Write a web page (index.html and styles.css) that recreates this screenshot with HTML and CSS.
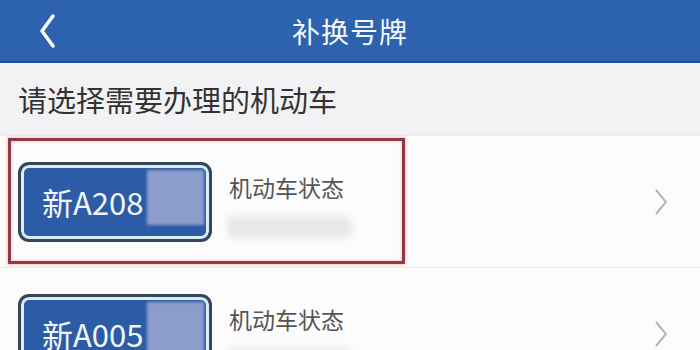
FILE: index.html
```
<!doctype html>
<html>
<head>
  <meta charset="utf-8">
  <title>补换号牌</title>
  <link rel="stylesheet" href="styles.css">
</head>
<body>

	<div class="topbar">
		<a class="back">
			<svg width="20" height="36" viewBox="0 0 20 36"><polyline points="15,3 4,18 15,33" fill="none" stroke="#fff" stroke-width="3.5" stroke-linecap="round" stroke-linejoin="round"/></svg>
		</a>
		<div class="title">补换号牌</div>
		<span></span>
	</div>

	<div class="section-title">请选择需要办理的机动车</div>

	<div class="list">
		<div class="row">
			<div class="plate">
				<span>新A208</span>
				<i class="mask"></i>
			</div>
			<div class="info">
				<div class="label">机动车状态</div>
				<div class="blurred"></div>
			</div>
			<svg class="arrow" width="14" height="28" viewBox="0 0 14 28"><polyline points="2,2 12,14 2,26" fill="none" stroke="#b4b4b4" stroke-width="2"/></svg>
			<div class="highlight"></div>
		</div>

		<div class="row">
			<div class="plate">
				<span>新A005</span>
				<i class="mask"></i>
			</div>
			<div class="info">
				<div class="label">机动车状态</div>
				<div class="blurred"></div>
			</div>
			<svg class="arrow" width="14" height="28" viewBox="0 0 14 28"><polyline points="2,2 12,14 2,26" fill="none" stroke="#b4b4b4" stroke-width="2"/></svg>
		</div>
	</div>

</body>
</html>
```

FILE: styles.css
```
	html, body {height: 100%}
	body {
		margin: 0;
		padding: 0;
		background: #fdfcfd;
		font-family: "Noto Sans CJK SC", "Noto Sans", sans-serif;
		overflow: hidden;
	}

	.topbar {
		height: 61px;
		background: #2d62ae;
		border-bottom: 2px solid #22508f;
		display: grid;
		grid-template-columns: 80px 1fr 80px;
		align-items: center;
	}
	.back {
		padding-left: 38px;
		display: flex;
		align-items: center;
	}
	.title {
		text-align: center;
		color: #f4f8fc;
		font-size: 28px;
		letter-spacing: 1px;
	}

	.section-title {
		height: 72px;
		background: #f2f2f4;
		padding-left: 18px;
		display: flex;
		align-items: center;
		font-size: 29px;
		color: #333;
		border-bottom: 1px solid #ececee;
	}

	.row {
		position: relative;
		height: 131px;
		display: flex;
		align-items: center;
		padding-left: 18px;
		border-bottom: 1px solid #ebe9ec;
	}

	.plate {
		position: relative;
		box-sizing: border-box;
		width: 194px;
		height: 80px;
		border: 3px solid #34475b;
		border-radius: 11px;
		background: #2d5ca6;
		box-shadow: inset 0 0 0 3px #d9eef5;
		display: flex;
		align-items: center;
		padding-left: 21px;
	}
	.plate span {
		color: #f2f6fb;
		font-size: 31px;
		line-height: 1;
	}
	.plate .mask {
		position: absolute;
		left: 126px;
		top: 5px;
		width: 57px;
		height: 55px;
		background: #8b9dcd;
		filter: blur(1.5px);
	}

	.info {
		margin-left: 15px;
		align-self: flex-start;
		padding-top: 34px;
	}
	.label {
		font-size: 23px;
		color: #555;
		padding-left: 2px;
	}
	.blurred {
		margin-top: 12px;
		width: 125px;
		height: 22px;
		background: #e8e8e8;
		border-radius: 8px;
		filter: blur(3px);
	}

	.arrow {
		margin-left: auto;
		margin-right: 32px;
	}

	.highlight {
		position: absolute;
		left: 8px;
		top: 2px;
		width: 391px;
		height: 120px;
		border: 3px solid #8e3a46;
		box-shadow: 0 0 3px 1px #f2c3c8, inset 0 0 3px 1px #f6d4d8;
	}
```
